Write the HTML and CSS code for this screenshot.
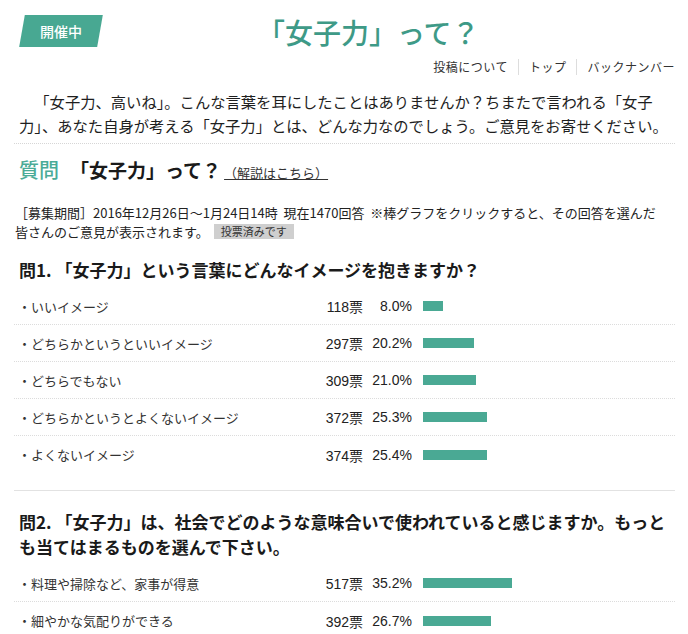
FILE: index.html
```html
<!DOCTYPE html>
<html lang="ja">
<head>
<meta charset="utf-8">
<title>「女子力」って？</title>
<link rel="stylesheet" href="styles.css">
</head>
<body>
<div class="page">
  <header class="header">
    <div class="badge"><span>開催中</span></div>
    <h1 class="title">「女子力」って？</h1>
  </header>
  <nav class="nav">
    <a>投稿について</a><a>トップ</a><a>バックナンバー</a>
  </nav>
  <p class="lead">「女子力、高いね」。こんな言葉を耳にしたことはありませんか？ちまたで言われる「女子力」、あなた自身が考える「女子力」とは、どんな力なのでしょう。ご意見をお寄せください。</p>

  <section class="survey">
    <h2 class="survey-title"><span class="q-label">質問</span><span class="q-name">「女子力」って？</span><a class="q-link">（解説はこちら）</a></h2>
    <p class="period">［募集期間］2016年12月26日〜1月24日14時&nbsp;&nbsp;現在1470回答&nbsp;&nbsp;※棒グラフをクリックすると、その回答を選んだ皆さんのご意見が表示されます。<span class="voted">投票済みです</span></p>

    <div class="question">
      <h3 class="q-head">問1. 「女子力」という言葉にどんなイメージを抱きますか？</h3>
      <ul class="answers">
        <li class="answer"><span class="label">・いいイメージ</span><span class="votes">118票</span><span class="pct">8.0%</span><span class="bar-cell"><span class="bar" style="width:20px"></span></span></li>
        <li class="answer"><span class="label">・どちらかというといいイメージ</span><span class="votes">297票</span><span class="pct">20.2%</span><span class="bar-cell"><span class="bar" style="width:51px"></span></span></li>
        <li class="answer"><span class="label">・どちらでもない</span><span class="votes">309票</span><span class="pct">21.0%</span><span class="bar-cell"><span class="bar" style="width:53px"></span></span></li>
        <li class="answer"><span class="label">・どちらかというとよくないイメージ</span><span class="votes">372票</span><span class="pct">25.3%</span><span class="bar-cell"><span class="bar" style="width:64px"></span></span></li>
        <li class="answer"><span class="label">・よくないイメージ</span><span class="votes">374票</span><span class="pct">25.4%</span><span class="bar-cell"><span class="bar" style="width:64px"></span></span></li>
      </ul>
    </div>

    <div class="question">
      <h3 class="q-head">問2. 「女子力」は、社会でどのような意味合いで使われていると感じますか。もっとも当てはまるものを選んで下さい。</h3>
      <ul class="answers">
        <li class="answer"><span class="label">・料理や掃除など、家事が得意</span><span class="votes">517票</span><span class="pct">35.2%</span><span class="bar-cell"><span class="bar" style="width:89px"></span></span></li>
        <li class="answer"><span class="label">・細やかな気配りができる</span><span class="votes">392票</span><span class="pct">26.7%</span><span class="bar-cell"><span class="bar" style="width:68px"></span></span></li>
      </ul>
    </div>
  </section>
</div>
</body>
</html>
```
FILE: styles.css
```css
html, body {
  margin: 0;
  padding: 0;
  background: #fff;
}
body {
  font-family: "Noto Sans CJK JP", "Noto Sans", sans-serif;
  color: #222;
  overflow: hidden;
}
.page {
  margin: 0 13px 0 14px;
}

/* header */
.header {
  display: flex;
  align-items: flex-start;
  padding-top: 15px;
}
.badge {
  margin-left: 8px;
  width: 78px;
  height: 32px;
  background: #48a892;
  transform: skewX(-10deg);
  display: flex;
  align-items: center;
  justify-content: center;
}
.badge span {
  transform: skewX(10deg);
  color: #fff;
  font-size: 14px;
  font-weight: 500;
  line-height: 16px;
}
.title {
  margin: 0 0 0 157px;
  font-size: 28px;
  font-weight: 500;
  line-height: 34px;
  color: #3e9a87;
}

/* nav */
.nav {
  display: flex;
  justify-content: flex-end;
  margin-top: 10px;
  font-size: 12px;
  line-height: 16px;
  color: #333;
  letter-spacing: 0.5px;
}
.nav a {
  padding: 0 10px;
  border-left: 1px solid #ddd;
}
.nav a:first-child {
  border-left: none;
}
.nav a:last-child {
  padding-right: 0;
}

/* lead */
.lead {
  margin: 14px 0 0;
  padding: 0 0 6px 5px;
  font-size: 15.3px;
  line-height: 24px;
  text-indent: 1em;
  color: #1e1e1e;
  border-bottom: 1px dotted #d6d6d6;
}

/* survey */
.survey-title {
  margin: 0;
  padding: 12px 0 0 5px;
  display: flex;
  align-items: baseline;
  font-weight: 700;
  line-height: 28px;
}
.q-label {
  font-size: 20px;
  font-weight: 500;
  color: #4aab97;
}
.q-name {
  margin-left: 11px;
  font-size: 19px;
  color: #1a1a1a;
}
.q-link {
  margin-left: 3px;
  font-size: 13px;
  font-weight: 400;
  color: #333;
  text-decoration: underline;
}
.period {
  margin: 16px 0 0;
  padding: 0 10px 0 1px;
  font-size: 13px;
  line-height: 19px;
  color: #222;
}
.voted {
  display: inline-block;
  margin-left: 5px;
  padding: 0 7px;
  background: #cfcfcf;
  font-size: 11px;
  line-height: 15px;
  color: #333;
  vertical-align: 1px;
}

.question {
  padding-bottom: 17px;
  border-bottom: 1px solid #e2e2e2;
}
.question:last-child {
  border-bottom: none;
}
.q-head {
  margin: 16px 0 0;
  padding-left: 5px;
  font-size: 17px;
  font-weight: 700;
  line-height: 25px;
  color: #1a1a1a;
}
.question + .question .q-head {
  margin-top: 18px;
}
.answers {
  list-style: none;
  margin: 6px 0 0;
  padding: 0;
}
.answer {
  display: grid;
  grid-template-columns: 1fr 50px 49px 263px;
  align-items: center;
  height: 37px;
  padding-left: 4px;
  border-bottom: 1px dotted #dcdcdc;
  box-sizing: border-box;
  font-size: 13px;
  color: #333;
}
.answer:last-child {
  border-bottom: none;
}
.votes, .pct {
  text-align: right;
  font-family: "Liberation Sans", "Noto Sans CJK JP", sans-serif;
  font-size: 14px;
  color: #222;
}
.bar-cell {
  padding-left: 11px;
  display: flex;
  align-items: center;
}
.bar {
  display: block;
  height: 10px;
  background: #4aa994;
}
```
